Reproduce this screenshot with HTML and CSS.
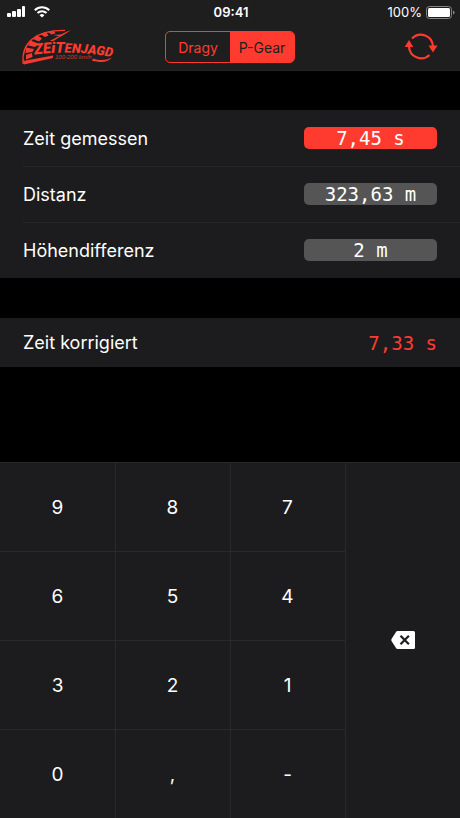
FILE: index.html
```html
<!DOCTYPE html>
<html lang="de">
<head>
<meta charset="utf-8">
<meta name="viewport" content="width=device-width, initial-scale=1">
<title>Zeitenjagd</title>
<link rel="stylesheet" href="styles.css">
</head>
<body>
<div class="app">
  <header class="top">
    <div class="status">
      <div class="status-left">
        <svg width="19" height="12" viewBox="0 0 19 12" fill="#fff" aria-hidden="true">
          <rect x="0" y="7" width="4" height="4" rx="1"/><rect x="5" y="5" width="4" height="6" rx="1"/><rect x="10" y="3" width="4" height="8" rx="1"/><rect x="15" y="0" width="3" height="11" rx="1"/>
        </svg>
        <svg width="16" height="12" viewBox="0 0 16 12" fill="none" stroke="#fff" stroke-width="2.1" aria-hidden="true">
          <path d="M.8 4.3a10.2 10.2 0 0 1 14.4 0M3.5 7.1a6.4 6.4 0 0 1 9 0"/><path d="M8 11.6 5.6 9.2a3.4 3.4 0 0 1 4.8 0z" fill="#fff" stroke="none"/>
        </svg>
      </div>
      <time class="clock">09:41</time>
      <div class="status-right">
        <span>100%</span>
        <svg width="29" height="13" viewBox="0 0 29 13" aria-hidden="true">
          <rect x=".5" y=".5" width="25" height="12" rx="3" fill="none" stroke="#858585"/>
          <rect x="2" y="2" width="22" height="9" rx="1.5" fill="#fff"/>
          <path d="M27 4.5q1.6.5 1.6 2t-1.6 2z" fill="#858585"/>
        </svg>
      </div>
    </div>
    <nav class="bar">
      <svg class="logo" width="92" height="38" viewBox="0 0 92 38" role="img" aria-label="Zeitenjagd">
        <defs><path id="logo-line" d="M12.500 26.500Q50 21.500 92 29.500"/></defs>
        <g fill="none" stroke="#f43a30">
          <path d="M1.200 36C-1 15 13 2 43 2.400" stroke-width="1.400"/>
        </g>
        <g fill="#f43a30">
          <path d="M4 27 10 25 10.500 29 4 31.500z"/>
          <path d="M4 19.500 12 21 10.500 24 3.500 25z"/>
          <path d="M8.500 12.500 16 15.500 13 19 6 17.500z"/>
          <path d="M15 7 20 10.500 17 13.500 11 11z"/>
          <path d="M24 4 26.500 7.500 23 9 18 6z"/>
          <path d="M32 3 33.500 5.500 29.500 6.500 26 4z"/>
          <path d="M49 2 28 12.800 31 13.200z"/>
          <path d="M31 7Q40 7 43 4.500L49 2 39 8.500z"/>
          <path d="M1 33 31 27.500V30L2 36.500z"/>
          <path d="M71 30.500Q81 34 90 29.500 84 35.500 75 33.500 72 32.800 70 33z"/>
        </g>
        <text class="logo-name"><textPath href="#logo-line"><tspan class="logo-lead">ZEiT</tspan>ENJAGD</textPath></text>
        <text class="logo-sub" x="33" y="31">100-200 km/h</text>
      </svg>
      <div class="segments" role="group" aria-label="Messgerät">
        <button type="button" aria-pressed="false">Dragy</button>
        <button type="button" aria-pressed="true">P-Gear</button>
      </div>
      <button class="reset" type="button" aria-label="Zurücksetzen">
        <svg width="34" height="30" viewBox="0 0 34 30" aria-hidden="true">
          <path d="M8 6.500A12.200 12.200 0 0 1 29 14.500M25.500 23A12.200 12.200 0 0 1 5 14.500" fill="none" stroke="#ff3b30" stroke-width="2.200"/>
          <path d="M24.500 13.500H33.500L29 20.500zM.700 15H9.300L5 8z" fill="#ff3b30"/>
        </svg>
      </button>
    </nav>
  </header>
  <main class="content">
    <form class="group">
      <div class="row"><label for="time">Zeit gemessen</label><input class="active" id="time" type="text" value="7,45 s"></div>
      <div class="row"><label for="distance">Distanz</label><input id="distance" type="text" value="323,63 m"></div>
      <div class="row"><label for="height">Höhendifferenz</label><input id="height" type="text" value="2 m"></div>
    </form>
    <section class="group result">
      <div class="row"><span>Zeit korrigiert</span><output>7,33 s</output></div>
    </section>
  </main>
  <div class="keypad">
    <button type="button">9</button><button type="button">8</button><button type="button">7</button>
    <button class="delete" type="button" aria-label="Löschen">
      <svg width="24" height="18" viewBox="0 0 24 18" aria-hidden="true">
        <path d="M6.500 0H22.500Q24 0 24 1.500V16.500Q24 18 22.500 18H6.500Q5.500 18 5 17L.500 10Q0 9 .500 8L5 1Q5.500 0 6.500 0z" fill="#fff"/>
        <path d="m9.500 4.800 8.400 8.400m0-8.400-8.400 8.400" stroke="#1c1c1e" stroke-width="2.200"/>
      </svg>
    </button>
    <button type="button">6</button><button type="button">5</button><button type="button">4</button>
    <button type="button">3</button><button type="button">2</button><button type="button">1</button>
    <button type="button">0</button><button type="button">,</button><button type="button">-</button>
  </div>
</div>
</body>
</html>
```
FILE: styles.css
```css
* {
  box-sizing: border-box;
}

body {
  margin: 0;
  background: #000;
  color: #fff;
  font-family: Inter, "Liberation Sans", sans-serif;
  font-size: 18px;
}

button {
  margin: 0;
  padding: 0;
  border: 0;
  background: none;
  color: inherit;
  font: inherit;
}

svg {
  display: block;
}

.app {
  display: flex;
  flex-direction: column;
  min-height: 100vh;
}

.top {
  background: #1e1e1e;
  border-bottom: 1px solid #232323;
}

.status {
  display: grid;
  grid-template-columns: 1fr auto 1fr;
  align-items: center;
  height: 24px;
  padding: 0 5px 0 7px;
  font-size: 13px;
}

.status-left,
.status-right {
  display: flex;
  align-items: center;
  gap: 8px;
}

.status-right {
  justify-content: flex-end;
  gap: 4px;
}

.clock {
  font-weight: 600;
}

.bar {
  display: grid;
  grid-template-columns: 1fr auto 1fr;
  align-items: center;
  height: 46px;
  padding: 0 22px;
}

.logo {
  overflow: visible;
}

.logo-name {
  fill: #ff3b30;
  font: italic 900 13px Roboto, sans-serif;
}

.logo-lead {
  font-size: 15px;
}

.logo-sub {
  fill: #d8372e;
  font: italic 6px "Liberation Sans", sans-serif;
}

.segments {
  display: grid;
  grid-template-columns: 1fr 1fr;
  width: 130px;
  height: 32px;
  overflow: hidden;
  border: 1px solid #ff3b30;
  border-radius: 5px;
  font-size: 14px;
}

.segments button {
  color: #ff3b30;
}

.segments button[aria-pressed="true"] {
  background: #ff3b30;
  color: #1e1e1e;
}

.reset {
  justify-self: end;
}

.content {
  display: grid;
  gap: 40px;
  padding: 39px 0 32px;
}

.group {
  margin: 0;
  background: #1c1c1e;
}

.row {
  display: flex;
  align-items: center;
  justify-content: space-between;
  height: 56px;
  margin-left: 23px;
  padding-right: 23px;
}

.row + .row {
  box-shadow: inset 0 1px #262628;
}

.row input {
  width: 133px;
  height: 22px;
  padding: 0;
  border: 0;
  border-radius: 5px;
  background: #555;
  color: #fff;
  font: 19px "DejaVu Sans Mono", monospace;
  text-align: center;
}

.row input.active {
  background: #ff3b30;
}

.result .row {
  height: 49px;
}

.result output {
  color: #ff3b30;
  font: 19px "DejaVu Sans Mono", monospace;
}

.keypad {
  display: grid;
  grid-template-columns: repeat(4, 1fr);
  grid-auto-rows: 89px;
  margin-top: auto;
  background: #1c1c1e;
  font-size: 19px;
}

.keypad button {
  padding-top: 2px;
  box-shadow: inset 1px 1px #29292b;
}

.keypad button:nth-child(1),
.keypad button:nth-child(3n + 5) {
  box-shadow: inset 0 1px #29292b;
}

.keypad .delete {
  grid-column: 4;
  grid-row: 1 / span 4;
  display: grid;
  place-items: center;
  padding: 0;
}
```
